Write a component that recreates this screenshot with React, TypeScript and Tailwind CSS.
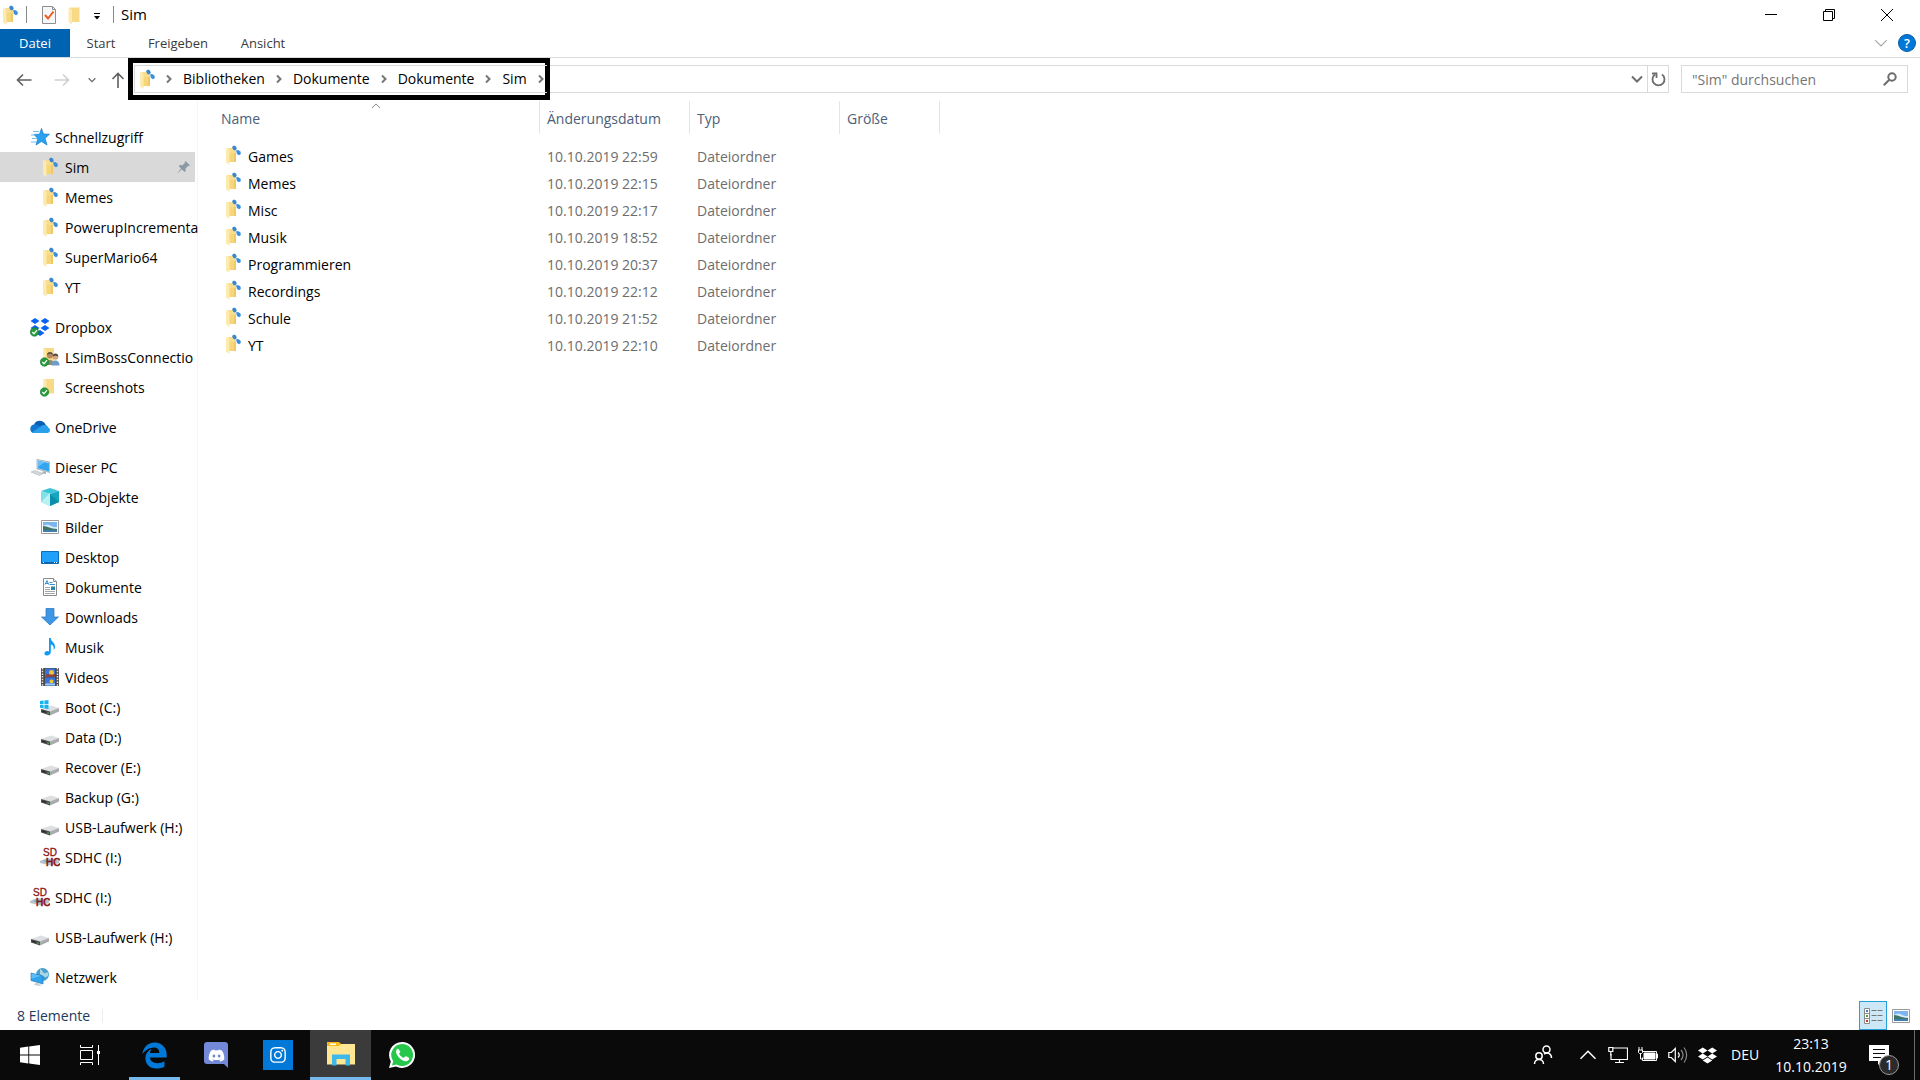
import React from 'react';
import { FaDiscord, FaDropbox, FaInstagram } from 'react-icons/fa';

type IconProps = { className?: string };

const SyncFolderIcon: React.FC<IconProps> = ({ className = 'size-5' }) => (
  <svg viewBox="0 0 20 20" className={className}>
    <path d="M5 3h8v14H6z" fill="#f6d67c" />
    <path d="M5 3h8v5H5z" fill="#f9dd8d" />
    <path d="M11 8h2v9h-2z" fill="#efc964" />
    <path d="M3 3l3.5 1.5V20L3 17.5z" fill="#fdeaae" />
    <path d="M9 2l2-1.500 2 1 .8 2.500-1.800 1.500-1.800-.7z" fill="#3a86cf" />
    <path d="M13 5.500l2-.5 2.500 1.500.3 2.500-1.800 1.300-2-1.300z" fill="#3a8fdc" />
  </svg>
);

const FolderIcon: React.FC<IconProps> = ({ className = 'size-5' }) => (
  <svg viewBox="0 0 20 20" className={className}>
    <path d="M5 2.500h9.500v14.500H6z" fill="#f8da86" />
    <path d="M3.500 2.500L7 4.500V19.500l-3.500-2.500z" fill="#fdeaae" />
  </svg>
);

const StarIcon: React.FC<IconProps> = () => (
  <svg viewBox="0 0 20 20" className="size-5">
    <path d="M11.500 1.500l2 5.500 6 .2-4.500 4 2 6.800-5.500-3.500L6 18l1.800-6.500L4 7.500l5.500-.3z" fill="#29a3ef" stroke="#1479c4" strokeWidth=".7" />
    <path d="M3 4.500h6M1 8h5M2 11.500h5M1 15h5" stroke="#5db7ee" strokeWidth=".9" />
  </svg>
);

const CheckBadge = () => (
  <>
    <circle cx="4.500" cy="15" r="4.300" fill="#239a3b" stroke="#137026" strokeWidth=".5" />
    <path d="M2.300 15l1.700 1.800 3-3.600" fill="none" stroke="#fff" strokeWidth="1.300" />
  </>
);

const DropboxIcon: React.FC<IconProps> = () => (
  <svg viewBox="0 0 20 20" className="size-5">
    <path d="M5 1l4.500 3L5 7 .500 4zM15 1l4.500 3L15 7l-4.500-3zM5 8l4.500 3L5 14 .500 11zM15 8l4.500 3-4.500 3-4.500-3zM10 13l4.500 3-4.500 3-4.500-3z" fill="#0a62f5" />
    <CheckBadge />
  </svg>
);

const SharedFolderIcon: React.FC<IconProps> = () => (
  <svg viewBox="0 0 20 20" className="size-5">
    <path d="M3.500 1H14v14H3.500z" fill="#f8da86" />
    <path d="M3 1l3 1.500V16l-3-1z" fill="#fdeaae" />
    <path d="M6 18c0-4 2-5 4-5s3 1 3.500 3V18z" fill="#8d8b72" />
    <circle cx="10" cy="8.500" r="3" fill="#b58a63" />
    <path d="M7 8c0-4 6-4 6 0l-3-1.500z" fill="#5a4c3c" />
    <path d="M11.500 18.500c0-4 2-5 4-5s4 1.500 4 5z" fill="#6d9cc9" />
    <circle cx="15.500" cy="10" r="2.800" fill="#d3a581" />
    <path d="M12.700 9.500c0-4 5.600-4 5.600 0l-2.800-1z" fill="#4a443f" />
    <CheckBadge />
  </svg>
);

const CheckedFolderIcon: React.FC<IconProps> = () => (
  <svg viewBox="0 0 20 20" className="size-5">
    <path d="M5 2h9v14.500H5z" fill="#f8da86" />
    <path d="M3 2l3.500 1.500V18L3 16z" fill="#fdeaae" />
    <CheckBadge />
  </svg>
);

const OneDriveIcon: React.FC<IconProps> = () => (
  <svg viewBox="0 0 20 20" className="size-5">
    <path d="M4 8c1-5 9-6 11.500-.5L19 12 2 14z" fill="#0a5fb4" />
    <path d="M4 16c-5 0-5-8 0-8.500 3-.5 5 1 7 2.500l-6 6z" fill="#1277d1" />
    <path d="M10 10c3-3.500 8-2 8 .5 3 1 2.500 5.500-1 5.500H4.500c-1.500 0-2-1-2-1z" fill="#28a0ea" />
  </svg>
);

const ComputerIcon: React.FC<IconProps> = () => (
  <svg viewBox="0 0 20 20" className="size-5">
    <path d="M7 2.500l13 2.500v10.500L7 12z" fill="#d8e2ea" stroke="#7c8a96" strokeWidth=".6" />
    <path d="M8 3.700l11 2.200v8.500L8 11.200z" fill="#35a5f0" />
    <path d="M8 3.700l7 1.400L8 10z" fill="#67c0fa" />
    <path d="M1 15l4-1.500 8 3-3.500 2z" fill="#d3d8dc" stroke="#a4abb1" strokeWidth=".5" />
    <path d="M13 14l3 1v2l-4-.5z" fill="#aab2b9" />
  </svg>
);

const CubeIcon: React.FC<IconProps> = () => (
  <svg viewBox="0 0 20 20" className="size-5">
    <path d="M1 4l9-3 9 3-9 3z" fill="#3cc3d6" />
    <path d="M1 4l9 3v12l-9-4z" fill="#7fe0ea" />
    <path d="M19 4l-9 3v12l9-4z" fill="#17a4bd" />
    <path d="M1 15l9-9v13z" fill="#b9f1f4" />
    <path d="M10 7l9 8-9 4z" fill="#0c8fab" />
  </svg>
);

const PictureIcon: React.FC<IconProps> = ({ className = 'size-5' }) => (
  <svg viewBox="0 0 20 20" className={className}>
    <path d="M1.500 3.500h17v13h-17z" fill="#fff" stroke="#9a9a9a" />
    <path d="M3 5h14v10H3z" fill="#7db5ee" />
    <path d="M3 9c4-2 6-1 8 0s4 1 6 1v2H3z" fill="#d7ecfa" />
    <path d="M3 9c5 0 7 3 14 3v3H3z" fill="#3f7566" />
    <path d="M3 13h14v2H3z" fill="#4180ae" />
  </svg>
);

const DesktopIcon: React.FC<IconProps> = () => (
  <svg viewBox="0 0 20 20" className="size-5">
    <path d="M1.500 4.500h17v12h-17z" fill="#1ea0fb" stroke="#0e6fb8" />
    <path d="M2 15h16v1.500H2z" fill="#0d64a8" />
    <path d="M3 15.500h1M14 15.500h1M16 15.500h1" stroke="#fff" />
  </svg>
);

const DocumentIcon: React.FC<IconProps> = () => (
  <svg viewBox="0 0 20 20" className="size-5">
    <path d="M3.500 1.500h10l3 3v14h-13z" fill="#fff" stroke="#8a8a8a" />
    <path d="M13.500 1.500v3h3" fill="#eee" stroke="#8a8a8a" />
    <path d="M5 7.500l2-4L8.500 7.500M5.500 6.500h3M9.500 5.500h3M9.500 7.500h5.500" fill="none" stroke="#1f86d2" strokeWidth=".9" />
    <path d="M5 10.500h5M5 12.500h5M5 14.500h10M5 16.500h10" stroke="#9a9a9a" strokeWidth=".9" />
    <path d="M11 9.500h4v3.500h-4z" fill="#2e7fae" />
  </svg>
);

const DownloadIcon: React.FC<IconProps> = () => (
  <svg viewBox="0 0 20 20" className="size-5">
    <path d="M6 1.500h8V10h4.500L10 18 1.500 10H6z" fill="#3d97e6" stroke="#2273bd" strokeWidth=".7" />
  </svg>
);

const MusicIcon: React.FC<IconProps> = () => (
  <svg viewBox="0 0 20 20" className="size-5">
    <path d="M9 1h1.800c0 4 4.700 4 4.200 9.500-.2 1-1 2-1.500 2.500.8-3.500-.5-5-2.700-5.500V15c0 2-2 3.500-4 3.500-3.500 0-3-4.500.5-4.500.700 0 1.300.2 1.700.5z" fill="#0c9bf5" />
  </svg>
);

const VideoIcon: React.FC<IconProps> = () => (
  <svg viewBox="0 0 20 20" className="size-5">
    <path d="M1 1h18v18H1z" fill="#4a4a4a" />
    <path d="M2.500 1v18M17.500 1v18" stroke="#e6e6e6" strokeWidth="1.500" strokeDasharray="1.500 1.200" />
    <path d="M5 1.500h10v8H5zM5 10.500h10v8H5z" fill="#3b73d9" />
    <circle cx="11.500" cy="5.500" r="2.500" fill="#efc33a" />
    <path d="M6 8c2-2 6 1 9-1v2.500H6z" fill="#a53a2b" />
    <circle cx="11.500" cy="14.500" r="2" fill="#efc33a" />
    <path d="M5 17c3-2 6 1 10-1v2.500H5z" fill="#9cc6f5" />
  </svg>
);

const DriveShape = () => (
  <>
    <path d="M1 12l10-3.500 8 2.500-9 4z" fill="#dedfe1" />
    <path d="M1 12l9 2.500v4L1 15.500z" fill="#4a4c4e" />
    <path d="M10 14.500l9-3.500v3.500l-9 4z" fill="#a9abae" />
    <path d="M2 13.500l4 1.200v1L2 14.500z" fill="#222" />
    <path d="M7.500 15.500h1.200v1.200H7.500z" fill="#4fd35a" />
  </>
);

const DriveIcon: React.FC<IconProps> = () => (
  <svg viewBox="0 0 20 20" className="size-5">
    <DriveShape />
  </svg>
);

const BootDriveIcon: React.FC<IconProps> = () => (
  <svg viewBox="0 0 20 20" className="size-5">
    <DriveShape />
    <path d="M0 4l3.600-.5V7H0zM4.400 3.400L8.500 3v4H4.400zM0 7.800h3.600v3.500L0 10.800zM4.400 7.800h4.100V12l-4.100-.6z" fill="#16b4ef" />
  </svg>
);

const SdCardIcon: React.FC<IconProps> = () => (
  <svg viewBox="0 0 20 20" className="size-5">
    <path d="M0 14l7-3 12 2v3l-8 2.500L0 16z" fill="#b9c3cb" />
    <path d="M3 14l5-1.500 5 1-5 2.500z" fill="#6bb0d8" />
    <text x="3" y="8.500" fontSize="10" fontFamily="Liberation Sans, sans-serif" fill="#8c1515" stroke="#8c1515" strokeWidth=".3">SD</text>
    <text x="6" y="18.500" fontSize="10" fontFamily="Liberation Sans, sans-serif" fill="#8c1515" stroke="#8c1515" strokeWidth=".6">HC</text>
  </svg>
);

const NetworkIcon: React.FC<IconProps> = () => (
  <svg viewBox="0 0 20 20" className="size-5">
    <circle cx="12.500" cy="7.500" r="6.500" fill="#4a9fcb" />
    <path d="M10 2c3 1 2 3 4 4s3-2 4 0-1 5-3 4-5-1-5-4z" fill="#a8d8e8" />
    <path d="M1 6l12 3v8L1 13.500z" fill="#2ea3ef" stroke="#1b6ea8" strokeWidth=".6" />
    <path d="M1.500 6.500l9 2.300-9 3z" fill="#5fbdfa" />
    <path d="M6 15.500l3 1v1l3 .5-2 1-6-1z" fill="#c5ccd1" />
  </svg>
);

const PinIcon = () => (
  <svg viewBox="0 0 14 14" className="size-3.5">
    <path d="M8.500 1l4.500 4.500-1.200.6-.8-.2-2.500 2.600.2 2.500-1.200 1L4.800 9.300 1 13l-.3-.3L4 8.500 1.800 6.200l1-1.200 2.700.2L8 2.800 7.800 2z" fill="#8b98a5" />
  </svg>
);

const Chevron: React.FC<{ d: string; className?: string; width?: number }> = ({ d, className = 'size-3', width = 2 }) => (
  <svg viewBox="0 0 12 12" className={className} fill="none" stroke="currentColor" strokeWidth={width}>
    <path d={d} />
  </svg>
);

const RIGHT = 'M4 2.500l3.500 3.500L4 9.500';
const DOWN = 'M1 3.500l5 5 5-5';
const UP = 'M1 8.500l5-5 5 5';

type NavItem = { label: string; icon: React.FC<IconProps>; active?: boolean };
type NavGroup = NavItem & { children?: NavItem[] };

const navGroups: NavGroup[] = [
  {
    label: 'Schnellzugriff',
    icon: StarIcon,
    children: [
      { label: 'Sim', icon: SyncFolderIcon, active: true },
      { label: 'Memes', icon: SyncFolderIcon },
      { label: 'PowerupIncrementa', icon: SyncFolderIcon },
      { label: 'SuperMario64', icon: SyncFolderIcon },
      { label: 'YT', icon: SyncFolderIcon },
    ],
  },
  {
    label: 'Dropbox',
    icon: DropboxIcon,
    children: [
      { label: 'LSimBossConnectio', icon: SharedFolderIcon },
      { label: 'Screenshots', icon: CheckedFolderIcon },
    ],
  },
  { label: 'OneDrive', icon: OneDriveIcon },
  {
    label: 'Dieser PC',
    icon: ComputerIcon,
    children: [
      { label: '3D-Objekte', icon: CubeIcon },
      { label: 'Bilder', icon: PictureIcon },
      { label: 'Desktop', icon: DesktopIcon },
      { label: 'Dokumente', icon: DocumentIcon },
      { label: 'Downloads', icon: DownloadIcon },
      { label: 'Musik', icon: MusicIcon },
      { label: 'Videos', icon: VideoIcon },
      { label: 'Boot (C:)', icon: BootDriveIcon },
      { label: 'Data (D:)', icon: DriveIcon },
      { label: 'Recover (E:)', icon: DriveIcon },
      { label: 'Backup (G:)', icon: DriveIcon },
      { label: 'USB-Laufwerk (H:)', icon: DriveIcon },
      { label: 'SDHC (I:)', icon: SdCardIcon },
    ],
  },
  { label: 'SDHC (I:)', icon: SdCardIcon },
  { label: 'USB-Laufwerk (H:)', icon: DriveIcon },
  { label: 'Netzwerk', icon: NetworkIcon },
];

const files = [
  { name: 'Games', date: '10.10.2019 22:59' },
  { name: 'Memes', date: '10.10.2019 22:15' },
  { name: 'Misc', date: '10.10.2019 22:17' },
  { name: 'Musik', date: '10.10.2019 18:52' },
  { name: 'Programmieren', date: '10.10.2019 20:37' },
  { name: 'Recordings', date: '10.10.2019 22:12' },
  { name: 'Schule', date: '10.10.2019 21:52' },
  { name: 'YT', date: '10.10.2019 22:10' },
];

const TitleBar = () => (
  <header className="flex h-[29px] items-center">
    <SyncFolderIcon className="size-5" />
    <span className="ml-1.5 h-[17px] w-px bg-[#8a8a8a]" />
    <button aria-label="Eigenschaften" className="ml-3">
      <svg viewBox="0 0 20 20" className="size-5">
        <path d="M3.500 1.500h10l3 3v14h-13z" fill="#f5f6f8" stroke="#8e8e8e" />
        <path d="M13.500 1.500v3h3" fill="none" stroke="#8e8e8e" />
        <path d="M6 10l3 3.500 5.500-7" fill="none" stroke="#f0591e" strokeWidth="2" />
      </svg>
    </button>
    <button aria-label="Neuer Ordner" className="ml-1.5">
      <FolderIcon />
    </button>
    <button aria-label="Symbolleiste anpassen" className="ml-2">
      <svg viewBox="0 0 8 8" className="mt-1 size-2">
        <path d="M1 .500h6" stroke="#000" />
        <path d="M1 3h6L4 6.500z" />
      </svg>
    </button>
    <span className="ml-3 h-[17px] w-px bg-[#8a8a8a]" />
    <h1 className="ml-[7px] text-[15px]">Sim</h1>
    <div className="ml-auto flex">
      <button aria-label="Minimieren" className="flex h-[29px] w-[58px] items-center justify-center">
        <svg viewBox="0 0 12 12" className="size-3" stroke="#000">
          <path d="M0 5.500h12" />
        </svg>
      </button>
      <button aria-label="Verkleinern" className="flex h-[29px] w-[58px] items-center justify-center">
        <svg viewBox="0 0 12 12" className="size-3" fill="none" stroke="#000">
          <path d="M.500 2.500h9v9h-9zM2.500 2.500v-2h9v9h-2" />
        </svg>
      </button>
      <button aria-label="Schließen" className="mr-1 flex h-[29px] w-[58px] items-center justify-center">
        <svg viewBox="0 0 12 12" className="size-3" stroke="#000">
          <path d="M0 0l12 12M12 0L0 12" />
        </svg>
      </button>
    </div>
  </header>
);

const Ribbon = () => (
  <div className="flex h-[29px] items-stretch border-b border-[#dadbdc] text-[13px] text-[#3b3b3b]">
    <button className="w-[70px] bg-[#0063b1] text-white">Datei</button>
    <button className="w-[62px]">Start</button>
    <button className="w-[92px]">Freigeben</button>
    <button className="w-[78px]">Ansicht</button>
    <div className="ml-auto flex items-center">
      <button aria-label="Menüband erweitern" className="text-[#a6a6a6]">
        <Chevron d={DOWN} className="size-3.5" width={1} />
      </button>
      <button aria-label="Hilfe" className="mr-1 ml-2.5 size-[18px] rounded-full border border-[#0a5ca8] bg-[#0078d7] text-[13px] leading-4 font-semibold text-white">
        ?
      </button>
    </div>
  </div>
);

const AddressBar = () => (
  <div className="flex h-[43px] items-start">
    <div className="flex h-[43px] w-32 shrink-0 items-center text-[#6d6d6d]">
      <button aria-label="Zurück" className="ml-4">
        <svg viewBox="0 0 16 16" className="size-4" fill="none" stroke="#5f5f5f" strokeWidth="1.600">
          <path d="M15.500 8H1.500M7 2.500L1.500 8 7 13.500" />
        </svg>
      </button>
      <button aria-label="Vorwärts" className="ml-[22px]">
        <svg viewBox="0 0 16 16" className="size-4" fill="none" stroke="#cfcfcf" strokeWidth="1.600">
          <path d="M.500 8h14M9 2.500L14.500 8 9 13.500" />
        </svg>
      </button>
      <button aria-label="Zuletzt besucht" className="ml-[18px]">
        <Chevron d={DOWN} className="size-2" />
      </button>
      <button aria-label="Nach oben" className="ml-3.5">
        <svg viewBox="0 0 16 16" className="size-4" fill="none" stroke="#5f5f5f" strokeWidth="1.600">
          <path d="M8 16V1.500M2.500 7L8 1.500 13.500 7" />
        </svg>
      </button>
    </div>
    <div className="mt-[7px] flex h-7 min-w-0 grow items-center border border-[#d9d9d9] border-l-0">
      <nav aria-label="Pfad" className="flex h-[42px] w-[422px] shrink-0 items-center border-[5px] border-black bg-white pl-px">
        <div className="flex h-7 grow items-center border-y border-l border-[#d9d9d9] pl-0.5 text-[#767676]">
          <SyncFolderIcon className="size-5" />
          <div className="ml-1.5 flex items-center gap-2">
            {['Bibliotheken', 'Dokumente', 'Dokumente', 'Sim'].map((part, index) => (
              <React.Fragment key={index}>
                <Chevron d={RIGHT} />
                <a href="#" className="text-black">
                  {part}
                </a>
              </React.Fragment>
            ))}
            <Chevron d={RIGHT} />
          </div>
        </div>
      </nav>
      <button aria-label="Vorherige Orte" className="ml-auto flex h-[26px] w-5 items-center justify-center text-[#6d6d6d]">
        <Chevron d={DOWN} className="size-3" />
      </button>
      <button aria-label="Aktualisieren" className="flex h-[26px] w-[21px] items-center justify-center border-l border-[#d9d9d9]">
        <svg viewBox="0 0 16 16" className="size-4" fill="none" stroke="#6d6d6d" strokeWidth="1.800">
          <path d="M5 3.500A6 6 0 1 0 12 3.500" />
          <path d="M2 2.500h4.500V7" />
        </svg>
      </button>
    </div>
    <label className="mt-[7px] mr-3 ml-3 flex h-7 w-[227px] shrink-0 items-center border border-[#d9d9d9]">
      <input
        type="text"
        aria-label="Suchen"
        placeholder={'"Sim" durchsuchen'}
        className="min-w-0 grow pt-0.5 pl-2.5 outline-none placeholder:text-[#757575]"
      />
      <svg viewBox="0 0 14 14" className="mr-2.5 size-3.5" fill="none" stroke="#6d6d6d" strokeWidth="2">
        <circle cx="9" cy="5" r="3.700" />
        <path d="M6.300 7.700L.8 13.200" />
      </svg>
    </label>
  </div>
);

const NavRow: React.FC<{ item: NavItem; nested?: boolean }> = ({ item, nested = false }) => {
  const Icon = item.icon;
  return (
    <a
      href="#"
      className={`flex h-[30px] items-center gap-[5px] whitespace-nowrap ${nested ? 'pl-10' : 'pl-[30px]'} ${
        item.active ? 'bg-[#d9d9d9]' : ''
      }`}
    >
      <span className="shrink-0">
        <Icon />
      </span>
      <span className="grow pt-0.5">{item.label}</span>
      {item.active && (
        <span className="mr-1 shrink-0">
          <PinIcon />
        </span>
      )}
    </a>
  );
};

const Sidebar = () => (
  <nav aria-label="Navigation" className="flex w-[198px] shrink-0 flex-col gap-2.5 border-r border-[#f5f5f5] pt-[21px] pr-0.5">
    {navGroups.map((group, index) => (
      <div key={index}>
        <NavRow item={group} />
        {group.children?.map((child) => (
          <NavRow key={child.label} item={child} nested />
        ))}
      </div>
    ))}
  </nav>
);

const FileTable = () => (
  <main className="min-w-0 grow">
    <table className="table-fixed border-collapse text-left">
      <colgroup>
        <col className="w-[342px]" />
        <col className="w-[150px]" />
        <col className="w-[150px]" />
        <col className="w-[100px]" />
      </colgroup>
      <thead className="text-[#4c607a]">
        <tr className="h-[42px] align-top">
          <th className="relative p-0 font-normal">
            <div className="flex h-[33px] items-center border-r border-[#e5e5e5] pt-0.5 pl-[23px]">Name</div>
            <Chevron d={UP} className="absolute top-0 left-[173px] size-2.5 text-[#6d6d6d]" width={1} />
          </th>
          {['Änderungsdatum', 'Typ', 'Größe'].map((title) => (
            <th key={title} className="p-0 font-normal">
              <div className="flex h-[33px] items-center border-r border-[#e5e5e5] pt-0.5 pl-[7px]">{title}</div>
            </th>
          ))}
        </tr>
      </thead>
      <tbody className="text-[#6d6d6d]">
        {files.map((file) => (
          <tr key={file.name} className="h-[27px]">
            <td className="p-0 text-black">
              <div className="flex items-center pl-[25px]">
                <SyncFolderIcon className="mb-1 size-5" />
                <span className="ml-[5px]">{file.name}</span>
              </div>
            </td>
            <td className="p-0 pl-[7px]">{file.date}</td>
            <td className="p-0 pl-[7px]">Dateiordner</td>
            <td className="p-0 pl-[7px]" />
          </tr>
        ))}
      </tbody>
    </table>
  </main>
);

const StatusBar = () => (
  <footer className="flex h-[29px] items-center pr-[9px] text-[#1e395b]">
    <span className="ml-[17px]">8 Elemente</span>
    <span className="ml-3 h-3.5 w-px bg-[#ededed]" />
    <button aria-label="Details" className="ml-auto flex h-[29px] w-7 items-center justify-center border border-[#26a0da] bg-[#cce8f6]">
      <svg viewBox="0 0 20 18" className="h-[18px] w-5" fill="none">
        <path d="M1.500 1.500h5v15h-5zM1.500 6.500h5M1.500 11.500h5" fill="#fff" stroke="#8b8b8b" />
        <path d="M3 3h2v2H3z" fill="#3b7ec4" />
        <path d="M3 8h2v2H3z" fill="#5c9a3a" />
        <path d="M3 13h2v2H3z" fill="#c0392b" />
        <path d="M8.500 3.500h5M14.500 3.500h5M8.500 8.500h5M14.500 8.500h5M8.500 13.500h5M14.500 13.500h5" stroke="#777" />
      </svg>
    </button>
    <button aria-label="Große Symbole" className="ml-1">
      <PictureIcon />
    </button>
  </footer>
);

const Taskbar = () => (
  <div className="flex h-[50px] items-stretch bg-[#0a0a0a] text-white">
    <button aria-label="Start" className="flex w-[60px] items-center justify-center">
      <svg viewBox="0 0 20 20" className="size-5" fill="#fff">
        <path d="M0 2.800l8.300-1.200v7.900H0zM9.200 1.500L20 0v9.500H9.200zM0 10.400h8.300v8L0 17.200zM9.200 10.400H20V20L9.200 18.500z" />
      </svg>
    </button>
    <button aria-label="Aufgabenansicht" className="flex w-[60px] items-center justify-center">
      <svg viewBox="0 0 20 20" className="size-5" fill="none" stroke="#fff">
        <path d="M.500 5.500h12v9H.500zM.500 0v2.500h12V0M.500 20v-2.500h12V20M18.500 0v20" />
        <path d="M17 6h3v3h-3z" fill="#fff" stroke="none" />
      </svg>
    </button>
    <button aria-label="Microsoft Edge" className="ml-[9px] flex w-[51px] items-center justify-center border-b-[3px] border-[#76b9ed] pt-[3px]">
      <svg viewBox="0 0 512 512" className="size-[27px]" fill="#0078d7">
        <path d="M486.300 243.700c0-44-7.800-84.500-28.800-122.400C416.500 47.900 343.900 8 258.900 8 119 7.700 40.600 113.200 26 227.700c42.400-61.300 117-121.400 220.400-125 0 0 109.700 0 99.400 105H170c6.400-37.400 18.600-59 34.300-79-75 35-121.800 96.100-120.700 188.400.8 71.400 50 144.800 120.700 172 83.400 31.800 192.800 7.200 240.200-21.400V363.300c-80.900 56.500-270.900 60.900-272.300-67.600h314.100z" />
      </svg>
    </button>
    <button aria-label="Discord" className="relative ml-1.5 flex w-[60px] items-center justify-center">
      <svg viewBox="0 0 24 26" className="h-[26px] w-6" fill="#7389d8">
        <path d="M3 0h18a3 3 0 0 1 3 3v23l-4-4H3a3 3 0 0 1-3-3V3a3 3 0 0 1 3-3z" />
      </svg>
      <FaDiscord className="absolute size-[17px]" />
    </button>
    <button aria-label="Instagram" className="ml-[17px] flex size-[30px] items-center justify-center self-center bg-[#0078d7]">
      <FaInstagram className="size-[18px]" />
    </button>
    <button aria-label="Explorer" className="ml-[17px] flex w-[61px] items-center justify-center border-b-[3px] border-[#76b9ed] bg-[#3b3b3b]">
      <svg viewBox="0 0 28 24" className="h-6 w-7">
        <path d="M0 2h28v20.500H0z" fill="#ffe693" />
        <path d="M0 0h12l2 2-2 2H0z" fill="#f9b916" />
        <path d="M3 1.500h6v1.500H3z" fill="#fff" />
        <path d="M5 12.500h18v11h-4.500V17h-9v6.500H5z" fill="#3db8ea" />
      </svg>
    </button>
    <button aria-label="WhatsApp" className="ml-[18px] flex w-[26px] items-center justify-center">
      <svg viewBox="0 0 26 26" className="size-[26px]">
        <path d="M13 0a13 13 0 1 1-6 24.500L0 26l1.800-6.500A13 13 0 0 1 13 0z" fill="#fff" />
        <path d="M13 2a11 11 0 1 1-5.500 20.500L3 23.500l1.200-4.300A11 11 0 0 1 13 2z" fill="#25c84b" />
        <path d="M9 6.500c-4 2.500-1 7 1.500 9.500s7 5 9.500 1.500c.5-1.500.2-2-3-3.300-1.500-.4-1.500 2.500-3.500 1.200-1.500-.8-3-2.500-3.300-3.600C10 11 12 10.500 11 9z" fill="#fff" />
      </svg>
    </button>

    <div className="ml-auto flex items-center">
      <button aria-label="Kontakte">
        <svg viewBox="0 0 20 20" className="size-5" fill="none" stroke="#fff" strokeWidth="1.500">
          <circle cx="13.500" cy="4.500" r="3.500" />
          <circle cx="6" cy="11" r="3.200" />
          <path d="M1.500 19c0-6 9-6 9 0M11 9c4-2 7.500-.5 7.500 4" />
        </svg>
      </button>
      <button aria-label="Ausgeblendete Symbole" className="ml-[26px]">
        <Chevron d={UP} className="size-[18px]" width={1} />
      </button>
      <button aria-label="Netzwerk" className="ml-[11px]">
        <svg viewBox="0 0 20 20" className="size-5" fill="none" stroke="#fff" strokeWidth="1.200">
          <path d="M5 3h14.500v11.500H3V9M11.500 14.500v3M7 17.500h9" />
          <path d="M.8 2.500h4v4h-4zM2.800 6.500v4" />
        </svg>
      </button>
      <button aria-label="Akku" className="ml-2.5">
        <svg viewBox="0 0 20 20" className="size-5" fill="none" stroke="#fff">
          <path d="M4.500 6.500h14v9h-14v-3M18.500 9h1v4h-1" />
          <path d="M6 8h11v6H6z" fill="#fff" />
          <path d="M1 2v3M4 2v3M.500 5h4v2.500l-1 1h-2l-1-1zM2.500 9v5h2" />
        </svg>
      </button>
      <button aria-label="Lautstärke" className="ml-2.5">
        <svg viewBox="0 0 20 20" className="size-5" fill="none" stroke="#fff" strokeWidth="1.200">
          <path d="M.8 7.500h2.500l4-4v13l-4-4H.8z" />
          <path d="M10 7.500c1.500 1.500 1.500 3.500 0 5" />
          <path d="M13 5c2.500 3 2.500 7 0 10M16 2.500c3.500 4.500 3.500 10.500 0 15" stroke="#8a8a8a" />
        </svg>
      </button>
      <button aria-label="Dropbox" className="ml-2.5">
        <FaDropbox className="size-[19px]" />
      </button>
      <button className="ml-3.5 w-7 text-sm">DEU</button>
      <button className="ml-3.5 w-[76px] text-center text-sm leading-[23px]">
        23:13
        <br />
        10.10.2019
      </button>
      <button aria-label="Benachrichtigungen" className="relative ml-5 flex h-[50px] w-[45px] items-center">
        <svg viewBox="0 0 20 20" className="size-5">
          <path d="M0 0h20v16h-7l-4 4v-4H0z" fill="#fff" />
          <path d="M4 4.500h12M4 8.500h12M4 12.500h8" stroke="#0a0a0a" />
        </svg>
        <span className="absolute top-[25px] left-2.5 size-5 rounded-full border border-[#9a9a9a] bg-[#2b2b2b] text-sm leading-[18px]">1</span>
      </button>
      <button aria-label="Desktop anzeigen" className="h-[50px] w-1.5 border-l border-[#6a6a6a]" />
    </div>
  </div>
);

export default function App() {
  return (
    <div className="flex min-h-screen flex-col bg-white font-['Open_Sans','Noto_Sans',sans-serif] text-sm text-black">
      <TitleBar />
      <Ribbon />
      <AddressBar />
      <div className="flex grow">
        <Sidebar />
        <FileTable />
      </div>
      <StatusBar />
      <Taskbar />
    </div>
  );
}
